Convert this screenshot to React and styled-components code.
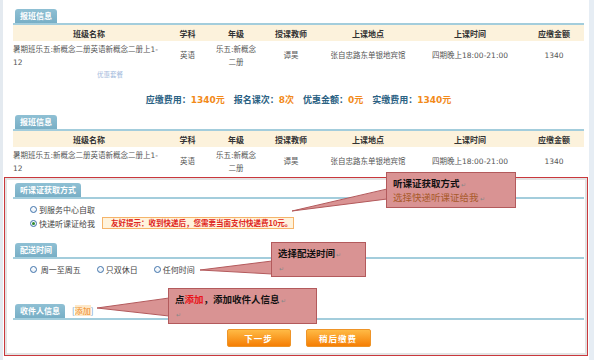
import styled, { createGlobalStyle } from "styled-components";

const GlobalStyle = createGlobalStyle`
  html, body {
    margin: 0;
    padding: 0;
    background: #fff;
  }
  body {
    font-family: "DejaVu Sans", "Noto Sans CJK SC", sans-serif;
  }
`;

const Page = styled.div`
  position: relative;
  width: 594px;
  height: 360px;
  box-sizing: border-box;
  border-left: 3px solid #e4eaf0;
  border-right: 5px solid #e6edf4;
  padding-top: 9px;
  overflow: hidden;
`;

const Section = styled.section`
  padding: 0 5px 0 10px;
  margin-bottom: ${(p) => p.$gap || 0}px;
`;

const TabBar = styled.div`
  display: flex;
  align-items: flex-end;
  gap: 7px;
  padding-left: 2px;
  border-bottom: 2px solid #a3cddc;
  margin-top: ${(p) => p.$top || 0}px;
`;

const Tab = styled.div`
  height: 14px;
  padding: 0 5px;
  background: linear-gradient(#8fc0d4, #78afc6);
  color: #fff;
  font-family: "Noto Sans CJK SC", sans-serif;
  font-size: 8px;
  font-weight: bold;
  line-height: 14px;
  border-radius: 3px 3px 0 0;
`;

const AddLink = styled.span`
  font-family: "Noto Sans CJK SC", sans-serif;
  font-size: 8px;
  line-height: 14px;
  color: #6d9cc4;

  b {
    color: #f08a1c;
    background: #fde8c8;
    font-weight: normal;
  }
`;

const Row = styled.div`
  display: grid;
  grid-template-columns: 152px 45px 52px 58px 96px 108px 60px;
  align-items: center;
`;

const HeadRow = styled(Row)`
  height: 16px;
  background: #fcf2dc;
  font-family: "Noto Sans CJK SC", sans-serif;
  font-size: 8px;
  font-weight: bold;
  color: #333;
`;

const DataRow = styled(Row)`
  height: 29px;
  font-size: 7.5px;
  line-height: 13px;
  color: #555;
`;

const Cell = styled.div`
  text-align: ${(p) => p.$align || "center"};
  padding: 0 ${(p) => (p.$align === "left" ? 0 : 4)}px;
`;

const Hint = styled.div`
  height: 8px;
  padding-left: 84px;
  font-family: "Noto Sans CJK SC", sans-serif;
  font-size: 6.5px;
  line-height: 8px;
  color: #8aa9d4;
  opacity: 0.8;
`;

const Summary = styled.div`
  display: flex;
  justify-content: center;
  gap: 9px;
  margin-top: 16px;
  font-family: "DejaVu Sans", "Noto Sans CJK SC", sans-serif;
  font-size: 9px;
  font-weight: bold;
  line-height: 12px;
  color: #2a6183;

  em {
    font-style: normal;
    color: #f28a1a;
  }
`;

const FormBox = styled.div`
  margin: 0 1px;
  height: 179px;
  box-sizing: border-box;
  border: 1px solid #c9383c;
  box-shadow: inset 0 0 0 2px #e3e3e3;
  padding: 5px 3px 0 8px;
`;

const OptionList = styled.div`
  display: flex;
  flex-direction: ${(p) => (p.$row ? "row" : "column")};
  gap: ${(p) => (p.$row ? 16 : 0)}px;
  padding: 3px 0 0 17px;
`;

const Option = styled.label`
  display: flex;
  align-items: center;
  gap: 2px;
  height: 14px;
  font-family: "Noto Sans CJK SC", sans-serif;
  font-size: 8px;
  color: #444;
  white-space: nowrap;
`;

const Radio = styled.span`
  position: relative;
  width: 5px;
  height: 5px;
  border: 1px solid #3f72aa;
  border-radius: 50%;
  background: linear-gradient(#fff, #e6eef6);

  &::after {
    content: "";
    display: ${(p) => (p.$checked ? "block" : "none")};
    position: absolute;
    left: 1px;
    top: 1px;
    width: 3px;
    height: 3px;
    border-radius: 50%;
    background: #2b8a2b;
  }
`;

const Tip = styled.span`
  margin-left: 5px;
  height: 10px;
  width: 174px;
  padding: 0 8px;
  background: #fff3dc;
  border: 1px solid #f5b46a;
  color: #e0281e;
  font-size: 7.5px;
  font-weight: bold;
  line-height: 10px;
`;

const Buttons = styled.div`
  display: flex;
  justify-content: center;
  gap: 15px;
  margin-top: 9px;
`;

const Button = styled.button`
  width: ${(p) => p.$width}px;
  height: 18px;
  padding: 0;
  border: 1px solid #ee9428;
  border-radius: 2px;
  background: linear-gradient(#ffba45, #f57e04);
  color: #fff;
  font-family: "Noto Sans CJK SC", sans-serif;
  font-size: 8.5px;
  font-weight: bold;
  letter-spacing: 1px;
`;

const Callout = styled.div`
  position: absolute;
  left: ${(p) => p.$x}px;
  top: ${(p) => p.$y}px;
  width: ${(p) => p.$w}px;
  height: ${(p) => p.$h}px;
  box-sizing: border-box;
  padding: 4px 6px;
  background: #d99393;
  border: 1px solid #b35a5c;
  font-family: "Noto Sans CJK SC", sans-serif;
  font-size: 9.5px;
  font-weight: bold;
  line-height: 12px;
  color: #111;

  p {
    margin: 0;
    white-space: nowrap;
  }
  em {
    font-style: normal;
    color: #e8141a;
  }
`;

const SubLine = styled.p`
  color: #a85a2a;
  font-weight: normal;
`;

const Mark = styled.span`
  font-size: 6px;
  font-weight: normal;
  color: #888;
  margin-left: 1px;
`;

const Tails = styled.svg`
  position: absolute;
  left: -3px;
  top: 0;
  pointer-events: none;
`;

const columns = ["班级名称", "学科", "年级", "授课教师", "上课地点", "上课时间", "应缴金额"];

function ClassTable() {
  return (
    <>
      <HeadRow>
        {columns.map((c) => (
          <Cell key={c}>{c}</Cell>
        ))}
      </HeadRow>
      <DataRow>
        <Cell $align="left">暑期班乐五:新概念二册英语新概念二册上1-12</Cell>
        <Cell>英语</Cell>
        <Cell>乐五:新概念二册</Cell>
        <Cell>谭昊</Cell>
        <Cell>张自忠路东单银地宾馆</Cell>
        <Cell>四期晚上18:00-21:00</Cell>
        <Cell>1340</Cell>
      </DataRow>
    </>
  );
}

function Tail({ points, edge }) {
  return (
    <>
      <polygon points={points} fill="#d99393" />
      <polyline points={edge} fill="none" stroke="#b35a5c" strokeWidth="1" />
    </>
  );
}

export default function App() {
  return (
    <>
      <GlobalStyle />
      <Page>
        <Section>
          <TabBar>
            <Tab>报班信息</Tab>
          </TabBar>
          <ClassTable />
          <Hint>优惠套餐</Hint>
          <Summary>
            <span>
              应缴费用：<em>1340元</em>
            </span>
            <span>
              报名课次：<em>8次</em>
            </span>
            <span>
              优惠金额：<em>0元</em>
            </span>
            <span>
              实缴费用：<em>1340元</em>
            </span>
          </Summary>
        </Section>

        <Section $gap={1}>
          <TabBar $top={9}>
            <Tab>报班信息</Tab>
          </TabBar>
          <ClassTable />
        </Section>

        <FormBox>
          <TabBar>
            <Tab>听课证获取方式</Tab>
          </TabBar>
          <OptionList>
            <Option>
              <Radio />
              到服务中心自取
            </Option>
            <Option>
              <Radio $checked />
              快递听课证给我
              <Tip>友好提示：收到快递后，您需要当面支付快递费10元。</Tip>
            </Option>
          </OptionList>

          <TabBar $top={13}>
            <Tab>配送时间</Tab>
          </TabBar>
          <OptionList $row>
            <Option>
              <Radio />
              &nbsp;周一至周五
            </Option>
            <Option>
              <Radio />
              只双休日
            </Option>
            <Option>
              <Radio />
              任何时间
            </Option>
          </OptionList>

          <TabBar $top={28}>
            <Tab>收件人信息</Tab>
            <AddLink>
              [<b>添加</b>]
            </AddLink>
          </TabBar>

          <Buttons>
            <Button $width={64}>下一步</Button>
            <Button $width={65}>稍后缴费</Button>
          </Buttons>
        </FormBox>

        <Tails width="594" height="360">
          <Tail points="388,189 388,199 292,211" edge="387,189 292,211 387,199" />
          <Tail points="273,261 273,274 200,270" edge="272,261 200,270 272,274" />
          <Tail points="170,298 170,316 97,308" edge="169,298 97,308 169,316" />
        </Tails>

        <Callout $x={383} $y={172} $w={130} $h={36}>
          <p>
            听课证获取方式<Mark>↵</Mark>
          </p>
          <SubLine>
            选择快递听课证给我<Mark>↵</Mark>
          </SubLine>
        </Callout>
        <Callout $x={268} $y={242} $w={95} $h={35}>
          <p>
            选择配送时间<Mark>↵</Mark>
          </p>
          <p>
            <Mark>↵</Mark>
          </p>
        </Callout>
        <Callout $x={165} $y={288} $w={149} $h={36}>
          <p>
            点<em>添加</em>，添加收件人信息<Mark>↵</Mark>
          </p>
          <p>
            <Mark>↵</Mark>
          </p>
        </Callout>
      </Page>
    </>
  );
}
